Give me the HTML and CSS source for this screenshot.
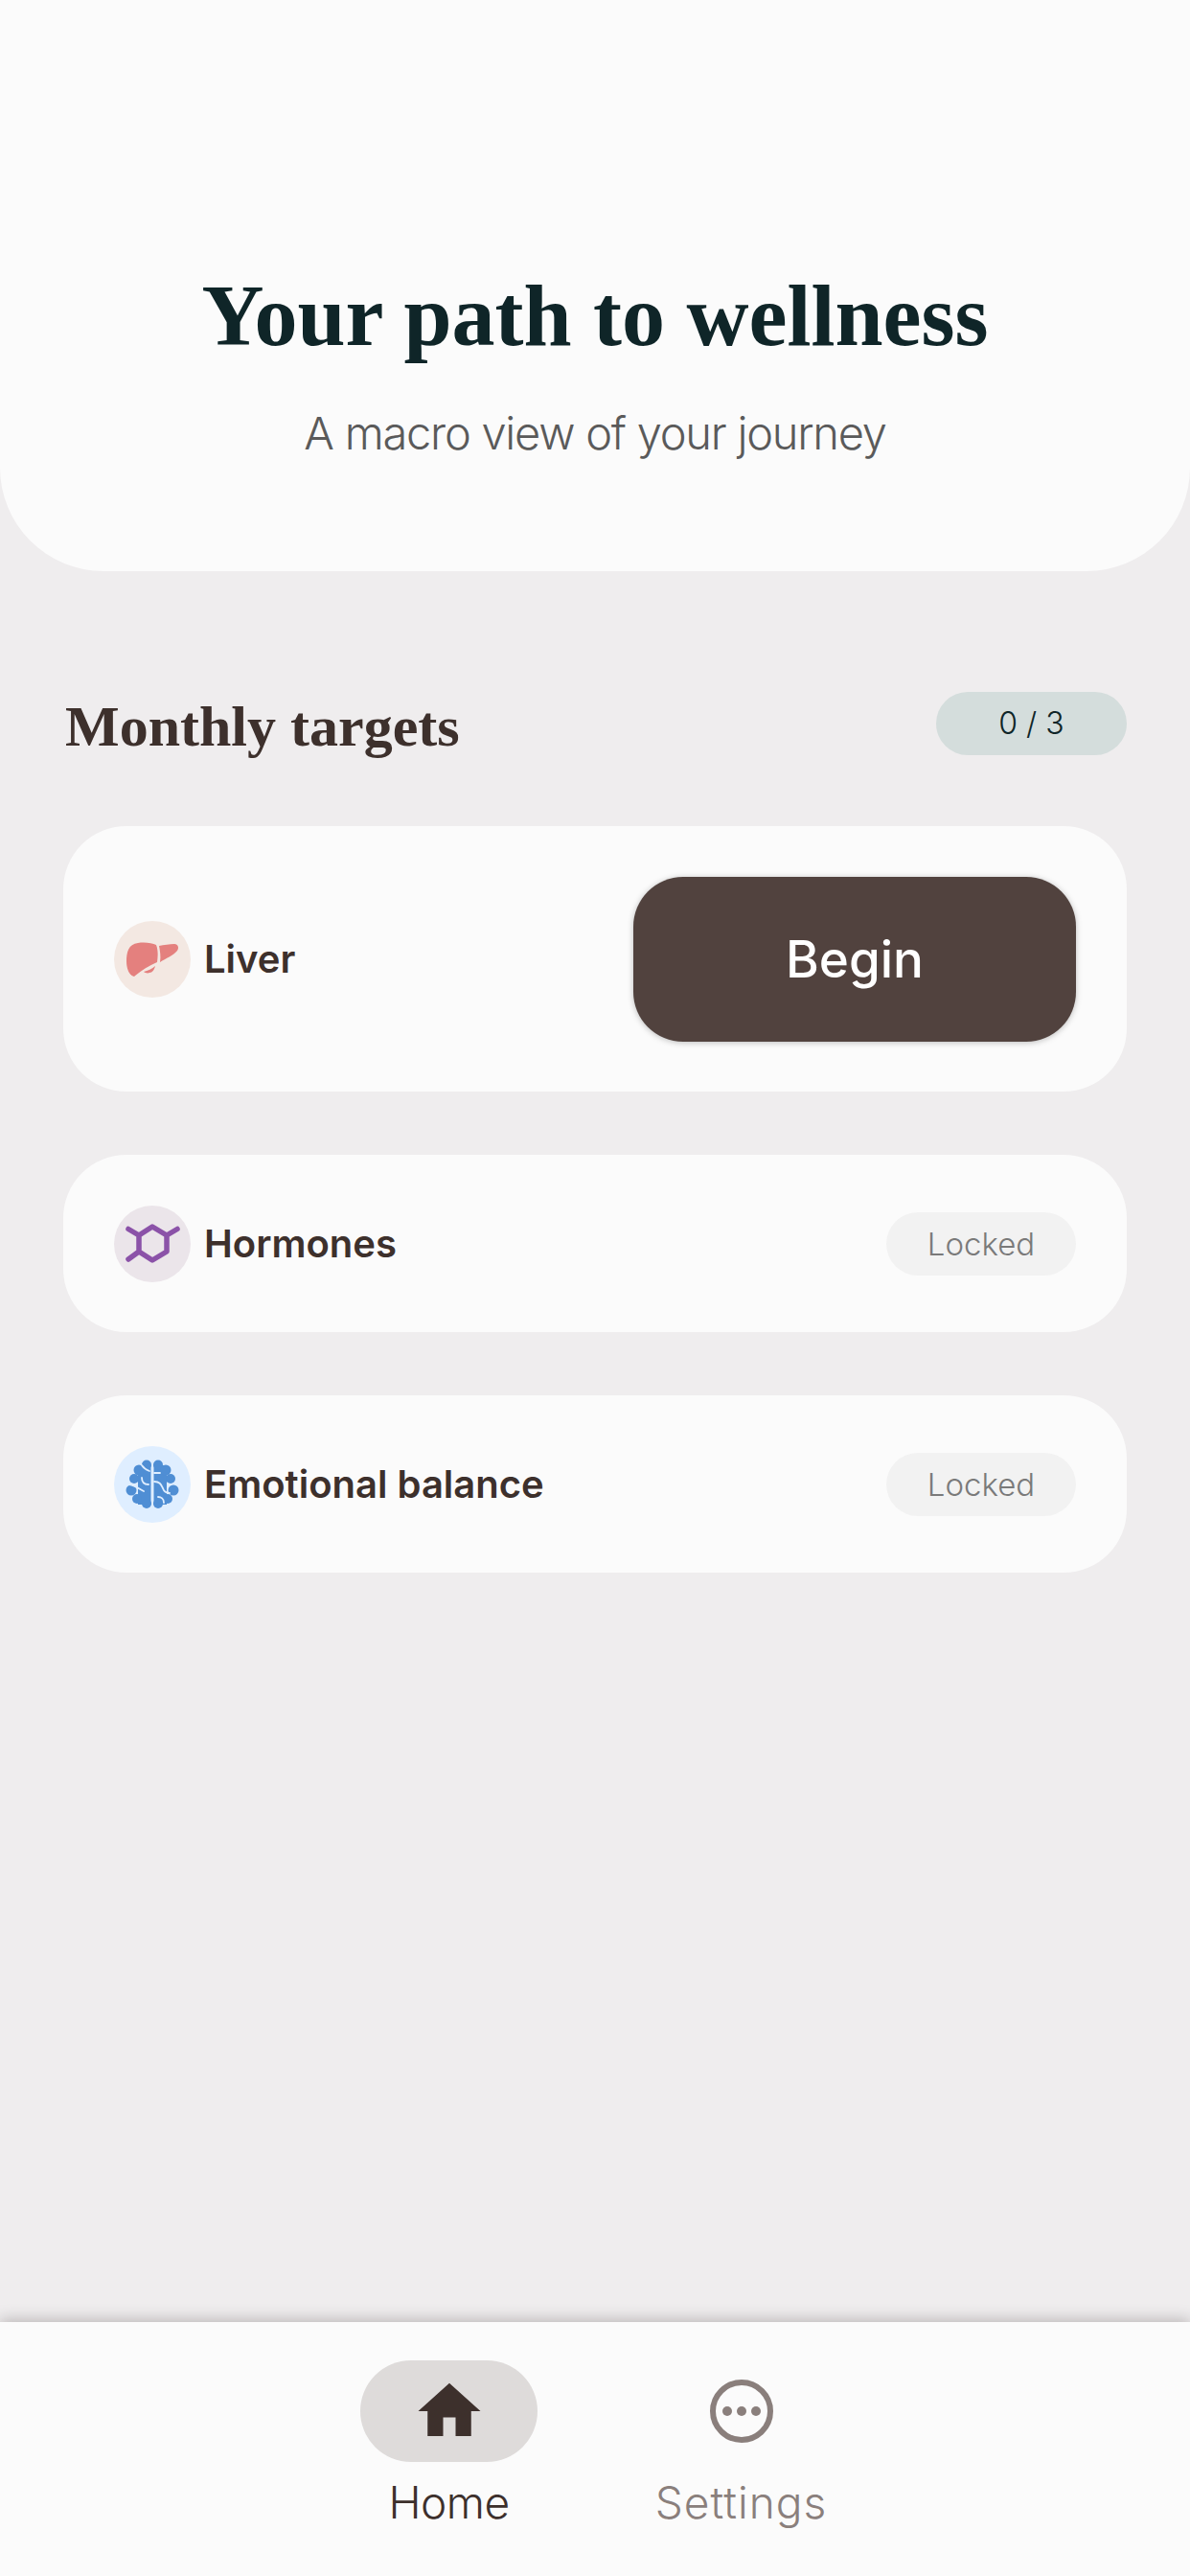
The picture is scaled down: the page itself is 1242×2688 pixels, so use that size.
FILE: index.html
```html
<!DOCTYPE html>
<html lang="en">
<head>
    <meta charset="UTF-8">
    <meta name="viewport" content="width=device-width, initial-scale=1.0">
    <title>Your path to wellness</title>
    <link rel="stylesheet" href="styles.css">
</head>
<body>
    <div class="page">

        <!-- Header -->
        <header class="hero">
            <h1>Your path to wellness</h1>
            <p>A macro view of your journey</p>
        </header>

        <!-- Targets -->
        <main class="content">
            <div class="sectionHead">
                <h2>Monthly targets</h2>
                <span class="count">0 / 3</span>
            </div>

            <div class="card">
                <div class="cardLabel">
                    <span class="organ organLiver">
                        <svg viewBox="0 0 80 80" width="80" height="80">
                            <path fill="#e4807e" d="M21 58C16 57 13 50 13 42C13 33 15 24 25 23C32 22 40 23 44 25C46 30 46 36 45 43C36 47 28 52 21 58Z"/>
                            <path fill="#e4807e" d="M47 26C52 25 58 24 63 24C67 24 68 28 66 31C62 36 54 39 48 43C49 37 48 31 47 26Z"/>
                            <path fill="#e4807e" d="M31 53C35 52 40 50 43 47C42 51 40 54 37 54C35 55 32 54 31 53Z"/>
                        </svg>
                    </span>
                    <span>Liver</span>
                </div>
                <button class="begin" type="button">Begin</button>
            </div>

            <div class="card">
                <div class="cardLabel">
                    <span class="organ organHormones">
                        <svg viewBox="0 0 80 80" width="80" height="80">
                            <path fill="none" stroke="#8b52a8" stroke-width="5.5" stroke-linecap="round" stroke-linejoin="round" d="M40 22L55 31V48L40 57L26 48V31ZM26 31L15 24.500M55 31L66 24.500M26 48L15 56"/>
                        </svg>
                    </span>
                    <span>Hormones</span>
                </div>
                <span class="locked">Locked</span>
            </div>

            <div class="card">
                <div class="cardLabel">
                    <span class="organ organBrain">
                        <svg viewBox="0 0 80 80" width="80" height="80">
                            <g fill="#4f8ed4">
                                <path d="M25 20H38.500V61H25Z"/>
                                <circle cx="34" cy="19.500" r="5"/>
                                <circle cx="26" cy="25" r="5.500"/>
                                <circle cx="21" cy="34" r="5"/>
                                <circle cx="18" cy="46" r="5.500"/>
                                <circle cx="24" cy="55" r="5"/>
                                <circle cx="34" cy="60" r="5"/>
                                <path d="M41.500 20H55V61H41.500Z"/>
                                <circle cx="46" cy="19.500" r="5"/>
                                <circle cx="54" cy="25" r="5.500"/>
                                <circle cx="59" cy="34" r="5"/>
                                <circle cx="62" cy="46" r="5.500"/>
                                <circle cx="56" cy="55" r="5"/>
                                <circle cx="46" cy="60" r="5"/>
                            </g>
                            <path fill="none" stroke="#dfeeff" stroke-width="1.800" stroke-linecap="round" d="M29 20C31 23 34 25 37 26M29 33C29 38 32 40 36 40M16 40C22 41 27 45 31 47M42 28H48M42 37C48 37 49 40 51 44C52 47 55 49 58 49M46 53C49 53 52 55 52 59"/>
                        </svg>
                    </span>
                    <span>Emotional balance</span>
                </div>
                <span class="locked">Locked</span>
            </div>
        </main>

        <!-- Bottom navigation -->
        <nav class="tabs">
            <div class="tab tabActive">
                <span class="tabIcon">
                    <svg viewBox="0 0 24 24" width="78" height="78">
                        <path fill="#3d302c" d="M10 20v-6h4v6h5v-8h3L12 3 2 12h3v8z"/>
                    </svg>
                </span>
                <span class="tabLabel">Home</span>
            </div>
            <div class="tab">
                <span class="tabIcon">
                    <svg viewBox="0 0 78 78" width="78" height="78">
                        <circle cx="39" cy="39" r="30" fill="none" stroke="#8a7f7c" stroke-width="6"/>
                        <circle cx="24" cy="39" r="5" fill="#8a7f7c"/>
                        <circle cx="39" cy="39" r="5" fill="#8a7f7c"/>
                        <circle cx="54" cy="39" r="5" fill="#8a7f7c"/>
                    </svg>
                </span>
                <span class="tabLabel">Settings</span>
            </div>
        </nav>

    </div>
</body>
</html>
```

FILE: styles.css
```css
body {
    margin: 0;
    font-family: Inter, "Noto Sans", sans-serif;
    background: #efedee;
}
.page {
    display: flex;
    flex-direction: column;
    height: 2688px;
    overflow: hidden;
}
.hero {
    height: 596px;
    box-sizing: border-box;
    padding-top: 280px;
    background: #fbfbfb;
    border-radius: 0 0 108px 108px;
    text-align: center;
}
.hero h1 {
    margin: 0;
    font-family: "Liberation Serif", serif;
    font-size: 90px;
    line-height: 100px;
    font-weight: 700;
    color: #0f2528;
}
.hero p {
    margin: 42px 0 0;
    font-size: 47px;
    line-height: 60px;
    font-weight: 300;
    letter-spacing: -1.250px;
    color: #5a5a5a;
}
.content {
    flex: 1;
    padding: 126px 66px 0;
}
.sectionHead {
    display: flex;
    justify-content: space-between;
    align-items: center;
    margin-bottom: 74px;
}
.sectionHead h2 {
    margin: 6px 0 0 2px;
    font-family: "Liberation Serif", serif;
    font-size: 60px;
    line-height: 60px;
    font-weight: 700;
    color: #3d302c;
}
.count {
    width: 199px;
    height: 66px;
    border-radius: 33px;
    background: #d4dddc;
    color: #0f2528;
    font-size: 32px;
    font-weight: 300;
    line-height: 66px;
    text-align: center;
}
.card {
    display: flex;
    justify-content: space-between;
    align-items: center;
    padding: 52.500px 53px;
    margin-bottom: 66px;
    background: #fbfbfb;
    border-radius: 66px;
}
.cardLabel {
    display: flex;
    align-items: center;
    gap: 14px;
    font-size: 40px;
    font-weight: 600;
    color: #3d302c;
}
.organ {
    display: block;
    width: 80px;
    height: 80px;
    border-radius: 50%;
}
.organ svg {
    display: block;
}
.organLiver {
    background: #f3e8e2;
}
.organHormones {
    background: #ebe5ea;
}
.organBrain {
    background: #dfeeff;
}
.begin {
    width: 462px;
    height: 172px;
    border: none;
    border-radius: 52px;
    background: #51423e;
    box-shadow: 0 1px 6px rgba(0, 0, 0, 0.25);
    color: #fff;
    font-family: inherit;
    font-size: 53px;
    font-weight: 500;
}
.locked {
    width: 198px;
    height: 66px;
    border-radius: 33px;
    background: #f2f2f2;
    color: #7a7a7a;
    font-size: 33px;
    font-weight: 300;
    line-height: 66px;
    text-align: center;
}
.tabs {
    display: flex;
    justify-content: center;
    gap: 120px;
    height: 265px;
    box-sizing: border-box;
    padding-top: 40px;
    background: #fbfbfb;
    box-shadow: 0 -3px 14px rgba(60, 50, 50, 0.28);
}
.tab {
    display: flex;
    flex-direction: column;
    align-items: center;
    width: 185px;
}
.tabIcon {
    display: flex;
    justify-content: center;
    align-items: center;
    width: 185px;
    height: 106px;
    border-radius: 53px;
}
.tabActive .tabIcon {
    background: #dedbda;
}
.tabLabel {
    margin-top: 14px;
    font-size: 46px;
    line-height: 56px;
    font-weight: 300;
    letter-spacing: 1px;
    color: #8a7f7c;
}
.tabActive .tabLabel {
    letter-spacing: -0.500px;
    color: #3d302c;
}
```
